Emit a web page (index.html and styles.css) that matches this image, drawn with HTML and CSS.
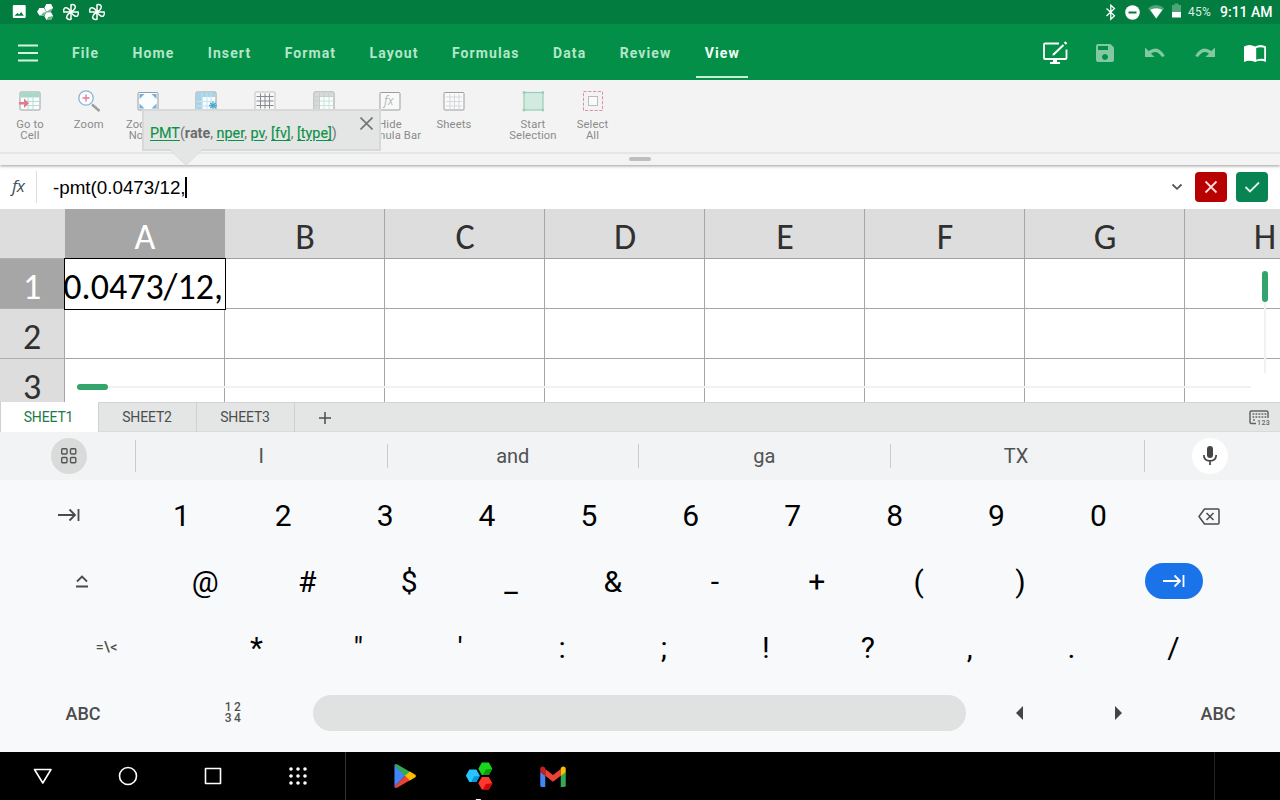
FILE: index.html
```html
<!DOCTYPE html>
<html lang="en">
<head>
<meta charset="utf-8">
<title>Spreadsheet</title>
<link rel="stylesheet" href="styles.css">
</head>
<body>
<div class="screen">
  <div class="status">
    <svg width="120" height="24" viewBox="0 0 120 24">
      <path fill="#fff" fill-rule="evenodd" d="M14 5h10.500q1.200 0 1.200 1.200v10.600q0 1.200-1.200 1.200h-10.500q-1.200 0-1.200-1.200v-10.600q0-1.200 1.200-1.200zM14.500 15.800h9.300l-2.600-3.800-2 2.400-1.700-1.400z"/>
      <g fill="#fff"><path d="M46.300 4h4.800l2 3.800-2.200 3.700h-4.500l-2-3.700zM39.400 8h4.500l2.200 3.800-2.200 3.700h-4.500l-2.300-3.700zM46.300 12.300h4.800l2 3.800-2.200 3.900h-4.500l-2-3.800z"/></g>
      <path fill="#75b290" d="M47 11.300l3-1.700 2.800-1.400-2 3.200zM41 15.300l2-2.600 3-.6-2.200 3.200zM46.500 20l1.800-3 4.700-1-2.200 4z"/>
      <g id="pinwheel" fill="none" stroke="#fff" stroke-width="1.500" stroke-linejoin="round">
        <path id="blade" d="M71 12V4.800C74.500 4 76 6 75 8.200C74.200 10.200 72.800 11 71 12z"/>
        <use href="#blade" transform="rotate(90 71 12)"/><use href="#blade" transform="rotate(180 71 12)"/><use href="#blade" transform="rotate(270 71 12)"/>
      </g>
      <use href="#pinwheel" x="26"/>
    </svg>
    <div class="status-right">
      <svg width="84" height="24" viewBox="1100 0 84 24">
        <path fill="none" stroke="#fff" stroke-width="1.300" d="M1106.500 8.500l8 7.300-3.700 3.400V5.300l3.700 3.300-8 7.300"/>
        <circle cx="1132.500" cy="12.500" r="7.300" fill="#fff"/><path d="M1128.500 11.500h8v2h-8z" fill="#027c3f"/>
        <path fill="#4fa478" d="M1148 8.200q8-6.600 16.300 0l-8.100 10.300z"/><path fill="#fff" d="M1150.200 9.800q6-3.300 12.200 0l-6.200 8.700z"/>
        <path fill="#4fa478" d="M1174.500 3.500h4v1.500h2.500v7h-9v-7h2.500z"/><path fill="#fff" d="M1172 12h9v5.500h-9z"/>
      </svg>
      <span class="battery">45%</span><span class="clock">9:11 AM</span>
    </div>
  </div>
  <header class="appbar">
    <svg class="burger" width="20" height="18" viewBox="0 0 20 18"><path stroke="#d5f5e2" stroke-width="1.800" d="M0 1.500h20M0 9h20M0 16.500h20"/></svg>
    <nav class="menu">
      <span>File</span><span>Home</span><span>Insert</span><span>Format</span><span>Layout</span><span>Formulas</span><span>Data</span><span>Review</span><span class="active">View</span>
    </nav>
    <svg class="tools" width="240" height="56" viewBox="1040 24 240 56">
      <g fill="none" stroke="#fff" stroke-width="1.800"><path d="M1059 43.500h-14q-1 0-1 1v13.500q0 1 1 1h20.500q1 0 1-1v-8.500"/><path stroke-width="2" d="M1053.500 54.500l10-9.500"/></g>
      <path fill="#fff" d="M1053 59h4v3h3v2h-10v-2h3zM1052.300 55.500l.8-2.500 2 2zM1063.800 42.700l1.500-1.500 2 2-1.500 1.500z"/>
      <g fill="#82c8a2"><path fill-rule="evenodd" d="M1098 44h12.500l3.500 3.500v12.500q0 2-2 2h-14q-2 0-2-2v-14q0-2 2-2zM1098 46v4h10v-4zM1105 54a3 3 0 1 0 .01 0z"/>
      <path d="M1145 47.500v9.500h9.500l-3.600-3.600q5.800-4.300 11.200 3.600l2.700-.9q-6.500-12-16.200-5z"/>
      <path d="M1215 47.500v9.500h-9.500l3.600-3.600q-5.800-4.300-11.200 3.600l-2.700-.9q6.500-12 16.200-5z"/></g>
      <path fill="#fff" fill-rule="evenodd" d="M1244 46.500q5.500-3 11 0q5.500-3 11 0v15.500q-5.500-2.500-11 0q-5.500-2.500-11 0zM1256.200 48v11.800q4-1.600 8-.8v-11.300q-4-1-8 .3z"/>
    </svg>
  </header>
  <div class="ribbon">
    <div class="tool w60"><svg viewBox="0 0 22 22"><rect x="1" y="2" width="20" height="18" rx="1" fill="#fafdfd" stroke="#9aa2a5"/><path fill="#a6d9c9" d="M1.500 2.500h19v5h-19z"/><path stroke="#b7ddd3" d="M9 7.500v12M14 7.500v12M6 11.500h14.500M6 15.500h14.500"/><path fill="#e5798b" d="M0 12h5v-3.500l5 4.700-5 4.700v-3.500h-5z"/></svg><span>Go to<br>Cell</span></div>
    <div class="tool w58"><svg viewBox="0 0 22 22"><path stroke="#9aa0a2" stroke-width="2.600" d="M14 14.500l7.500 6.500"/><circle cx="8" cy="8" r="7.200" fill="#f8fcff" stroke="#85b5d9" stroke-width="1.300"/><path stroke="#e5798b" stroke-width="1.300" d="M4.500 8h7M8 4.500v7"/></svg><span>Zoom</span></div>
    <div class="tool w60"><svg viewBox="0 0 22 22"><rect x="1" y="2.500" width="20" height="17.500" rx="1" fill="#fafdff" stroke="#969b9f"/><path fill="#78aed8" d="M2.500 4h5l-5 5zM19.500 4h-5l5 5zM2.500 18.500v-5l5 5zM19.500 18.500v-5l-5 5z"/></svg><span>Zoom to<br>Normal</span></div>
    <div class="tool w58"><svg viewBox="0 0 22 22"><rect x="1" y="2" width="20" height="18" rx="1" fill="#fafdff" stroke="#969b9f"/><path fill="#a5d4e8" d="M1.500 2.500h19v4.500h-13v13h-6z"/><path stroke="#c6e3ee" fill="none" d="M2 11.500h18M2 16h18M12 3v16M16 3v12M7 3v17"/><path stroke="#4ea6d2" stroke-width="1.300" d="M18 11.500v8M14 15.500h8M15.200 12.700l5.600 5.600M20.800 12.700l-5.600 5.600"/></svg></div>
    <div class="tool w59"><svg viewBox="0 0 22 22"><rect x="1" y="2" width="20" height="18" rx="1" fill="#f7f7f7" stroke="#bfc1c2"/><path stroke="#858b90" d="M2.500 6.500h17M2.500 11h17M2.500 15.500h17M6.500 3.500v15M11 3.500v15M15.500 3.500v15"/></svg></div>
    <div class="tool w59"><svg viewBox="0 0 22 22"><rect x="1" y="2" width="20" height="18" rx="1" fill="#f8fcfb" stroke="#9a9ea1"/><path fill="#d7dadb" d="M1.500 2.500h19v4h-14v13h-5z"/><path stroke="#c9e4db" d="M7 11h13M7 15.500h13M11 7v12M16 7v12"/><path stroke="#c9cdce" d="M2 6.500h18.500M6.500 3v16.500M2 11h4M2 15.500h4M11 3v3M16 3v3"/></svg></div>
    <div class="tool w73"><svg viewBox="0 0 22 22"><rect x="1" y="2.500" width="20" height="17.500" rx="1" fill="#f9f9f9" stroke="#999da0"/><text class="fx-icon" x="5" y="15">fx</text></svg><span>Hide<br>Formula Bar</span></div>
    <div class="tool w55"><svg viewBox="0 0 22 22"><rect x="1" y="2.500" width="20" height="17.500" rx="1" fill="#fafafa" stroke="#999da0"/><path stroke="#d6d9da" d="M3 7h16M3 11.500h16M3 16h16M7 4v15M11.500 4v15M16 4v15"/></svg><span>Sheets</span></div>
    <div class="tool w103"><svg viewBox="0 0 22 22"><rect x="2" y="2.500" width="19" height="17.500" fill="#d3eae0" stroke="#96cfb7" stroke-width="1.200"/><path fill="#96cfb7" d="M.7 1.200h2.600v2.600h-2.600zM19.700 1.200h2.600v2.600h-2.600zM.7 18.700h2.600v2.600h-2.600zM19.700 18.700h2.600v2.600h-2.600z"/></svg><span>Start<br>Selection</span></div>
    <div class="tool w15"><svg viewBox="0 0 22 22"><rect x="1.500" y="1.500" width="19" height="19" fill="none" stroke="#dc92a0" stroke-dasharray="3.200 1.550"/><rect x="6.500" y="6.500" width="9" height="9" fill="#fafafa" stroke="#b8bcbd"/></svg><span>Select<br>All</span></div>
    <div class="tip">
      <p><a>PMT</a>(<b>rate</b>, <a>nper</a>, <a>pv</a>, <a>[fv]</a>, <a>[type]</a>)</p>
      <svg class="tip-x" width="13" height="13" viewBox="0 0 13 13"><path stroke="#737473" stroke-width="1.600" d="M.5.500l12 12M12.500.500l-12 12"/></svg>
      <svg class="tip-arrow" width="32" height="17" viewBox="0 0 32 17"><path d="M0 0h32l-15 15q-1 1-2 0z" fill="#e4e6e5"/><path d="M0 1l15 14q1 1 2 0l15-14" fill="none" stroke="#d9dbda"/></svg>
    </div>
  </div>
  <div class="handle"><i></i></div>
  <div class="formula">
    <span class="fx">fx</span>
    <div class="input">-pmt(0.0473/12,<i></i></div>
    <svg width="12" height="8" viewBox="0 0 12 8"><path fill="none" stroke="#555" stroke-width="1.800" d="M1.500 1.500l4.500 4.300 4.500-4.300"/></svg>
    <button class="no"><svg width="14" height="14" viewBox="0 0 14 14"><path stroke="#f6dada" stroke-width="1.800" d="M1.500 1.500l11 11M12.500 1.500l-11 11"/></svg></button>
    <button class="yes"><svg width="16" height="14" viewBox="0 0 16 14"><path fill="none" stroke="#e2f3ea" stroke-width="1.800" d="M1.500 7l4.500 4.500 9-9"/></svg></button>
  </div>
  <div class="sheet">
    <div class="h corner"></div><div class="h sel">A</div><div class="h">B</div><div class="h">C</div><div class="h">D</div><div class="h">E</div><div class="h">F</div><div class="h">G</div><div class="h">H</div>
    <div class="h r sel">1</div><div class="c"><div class="edit"><span>-pmt(0.0473/12,</span></div></div><div class="c"></div><div class="c"></div><div class="c"></div><div class="c"></div><div class="c"></div><div class="c"></div><div class="c"></div>
    <div class="h r">2</div><div class="c"></div><div class="c"></div><div class="c"></div><div class="c"></div><div class="c"></div><div class="c"></div><div class="c"></div><div class="c"></div>
    <div class="h r">3</div><div class="c"></div><div class="c"></div><div class="c"></div><div class="c"></div><div class="c"></div><div class="c"></div><div class="c"></div><div class="c"></div>
    <div class="vbar"><i></i></div><div class="hbar"><i></i></div>
  </div>
  <div class="tabs">
    <span class="tab on">SHEET1</span><span class="tab">SHEET2</span><span class="tab">SHEET3</span>
    <svg class="add" width="14" height="14" viewBox="0 0 14 14"><path stroke="#4b4d4c" stroke-width="1.500" d="M1 7h12M7 1v12"/></svg>
    <svg class="kbd" width="24" height="18" viewBox="0 0 24 18"><path fill="none" stroke="#626463" stroke-width="1.500" d="M8 14.500h-4.500q-1.500 0-1.500-1.500v-9.500q0-1.500 1.500-1.500h15q1.500 0 1.500 1.500v5.500"/><path stroke="#626463" stroke-width="1.700" stroke-dasharray="1.800 1.200" d="M4.500 5h14M4.500 8h14M5 11h3"/><text x="9" y="16">123</text></svg>
  </div>
  <div class="suggest">
    <div class="side"><span class="round gray"><svg width="18" height="18" viewBox="0 0 18 18"><g fill="none" stroke="#555" stroke-width="1.400"><rect x="1.700" y="1.700" width="5.300" height="5.300" rx="1"/><rect x="10.500" y="1.700" width="5.300" height="5.300" rx="1"/><rect x="1.700" y="10.500" width="5.300" height="5.300" rx="1"/><rect x="10.500" y="10.500" width="5.300" height="5.300" rx="1"/></g></svg></span></div>
    <div class="word">I</div><div class="word">and</div><div class="word">ga</div><div class="word last">TX</div>
    <div class="side mic"><span class="round"><svg width="16" height="20" viewBox="0 0 16 20"><rect x="5" y="0" width="6" height="12" rx="3" fill="#444"/><path fill="none" stroke="#444" stroke-width="1.700" d="M1.800 9q0 5.800 6.200 5.800t6.200-5.800M8 15v4"/></svg></span></div>
  </div>
  <div class="keyboard">
    <div class="krow one">
      <div class="fn"><svg width="22" height="14" viewBox="0 0 22 14"><path fill="none" stroke="#4b4b4b" stroke-width="1.800" d="M0 7h17M11.500 1.500l5.500 5.500-5.500 5.500M20.500 1v12"/></svg></div>
      <kbd>1</kbd><kbd>2</kbd><kbd>3</kbd><kbd>4</kbd><kbd>5</kbd><kbd>6</kbd><kbd>7</kbd><kbd>8</kbd><kbd>9</kbd><kbd>0</kbd>
      <div class="fn end"><svg width="22" height="17" viewBox="0 0 22 17"><path fill="none" stroke="#4b4b4b" stroke-width="1.500" stroke-linejoin="round" d="M6.500 1h13.500q1 0 1 1v13q0 1-1 1h-13.500l-5.500-7.500z"/><path stroke="#4b4b4b" stroke-width="1.500" d="M8.500 5l7 7M15.500 5l-7 7"/></svg></div>
    </div>
    <div class="krow two">
      <div class="fn"><svg width="14" height="14" viewBox="0 0 14 14"><path fill="none" stroke="#4b4b4b" stroke-width="1.800" d="M2 7.500l5-5 5 5M1 12.500h12"/></svg></div>
      <kbd>@</kbd><kbd>#</kbd><kbd>$</kbd><kbd>_</kbd><kbd>&amp;</kbd><kbd>-</kbd><kbd>+</kbd><kbd>(</kbd><kbd>)</kbd>
      <div class="fn end"><span class="enter"><svg width="22" height="14" viewBox="0 0 22 14"><path fill="none" stroke="#fff" stroke-width="1.800" d="M0 7h17M11.500 1.500l5.500 5.500-5.500 5.500M20.500 1v12"/></svg></span></div>
    </div>
    <div class="krow three">
      <div class="fn sym">=\&lt;</div>
      <kbd>*</kbd><kbd>"</kbd><kbd>'</kbd><kbd>:</kbd><kbd>;</kbd><kbd>!</kbd><kbd>?</kbd><kbd>,</kbd><kbd>.</kbd><kbd>/</kbd>
    </div>
    <div class="krow four">
      <div class="abc">ABC</div>
      <div class="nums">1 2<br>3 4</div>
      <div class="space"></div>
      <div class="arrow"><svg width="7" height="14" viewBox="0 0 7 14"><path fill="#444" d="M7 0v14l-7-7z"/></svg></div>
      <div class="arrow"><svg width="7" height="14" viewBox="0 0 7 14"><path fill="#444" d="M0 0v14l7-7z"/></svg></div>
      <div class="abc end">ABC</div>
    </div>
  </div>
  <footer class="navbar">
    <svg width="345" height="48" viewBox="0 752 345 48"><g fill="none" stroke="#fff" stroke-width="1.600" stroke-linejoin="round"><path d="M34.500 769.500h16.500l-8.200 13.500z"/><circle cx="128" cy="776" r="8.500"/><rect x="205.500" y="768.500" width="15" height="15"/></g><path stroke="#fff" stroke-width="3.600" stroke-linecap="round" stroke-dasharray="0 7" d="M291 769h15M291 776h15M291 783h15"/></svg>
    <svg class="apps" width="869" height="48" viewBox="346 752 869 48">
      <path fill="#4285f4" d="M394.500 765v22l11-11.500z"/><path fill="#34a853" d="M394.500 765q1-1.500 3-.5l13 7.500-5 4.500z"/><path fill="#ea4335" d="M394.500 787q1 1.500 3 .5l13-7.500-5-4.500z"/><path fill="#fbbc04" d="M410 771.500l5 3q2 1.500 0 3l-5 3-5-4.700z"/>
      <path fill="#27c4ff" d="M469.500 769.500h7l3.500 6.200-3.500 6.300h-7l-3.500-6.300z"/><path fill="#0b93dc" d="M471.500 782l2.500-5.500 6-.8-3.500 6.300z"/>
      <path fill="#18d51d" d="M482 762.500h7l3.500 6.200-3.500 6.300h-7l-3.500-6.300z"/><path fill="#109a0b" d="M483 775l3-5.500 6.500-.8-3.500 6.300z"/>
      <path fill="#ff3830" d="M482 777h7l3.500 6.200-3.500 6.300h-7l-3.500-6.300z"/><path fill="#d30709" d="M483 789.500l3-5.500 6.500-.8-3.500 6.300z"/>
      <path fill="#4285f4" d="M540.500 772l5 3.500v11.500h-3.500q-1.500 0-1.500-1.500z"/><path fill="#34a853" d="M566 772l-5 3.500v11.500h3.500q1.500 0 1.500-1.500z"/><path fill="#ea4335" d="M545.500 769l7.700 6 7.800-6v6.800l-7.800 6-7.700-6z"/><path fill="#c5221f" d="M540.500 769q0-2.500 2.500-2.500 1.500 0 2.500 1.500v8l-5-3.800z"/><path fill="#fbbc04" d="M566 769q0-2.500-2.500-2.500-1.500 0-2.500 1.500v8l5-3.800z"/>
      <path fill="#fff" d="M476 799h5v1h-5z"/>
    </svg>
  </footer>
</div>
</body>
</html>
```
FILE: styles.css
```css
* { box-sizing: border-box; }
body { margin: 0; }
.screen { width: 1280px; height: 800px; overflow: hidden; display: flex; flex-direction: column; font-family: Roboto, "Liberation Sans", sans-serif; }
svg { display: block; flex: none; }

.status { height: 24px; background: #027c3f; display: flex; justify-content: space-between; color: #fff; }
.status-right { display: flex; align-items: center; width: 180px; }
.battery { font-size: 12px; letter-spacing: .2px; color: #d9f0e2; width: 32px; padding-left: 4px; }
.clock { font-size: 14px; font-weight: 500; white-space: nowrap; padding-left: 4px; letter-spacing: 0; }

.appbar { height: 56px; background: #048f48; display: flex; align-items: center; }
.burger { margin: 2px 0 0 18px; }
.menu { display: flex; margin-left: 25px; height: 56px; flex: 1; gap: 16.400px; }
.menu span { padding: 4px 8px 0 9px; display: flex; align-items: center; height: 54px; font-size: 14px; font-weight: 700; letter-spacing: 1.100px; color: #b4e6c9; }
.menu .active { color: #f2fff7; border-bottom: 2px solid #c9eed8; padding-top: 6px; }

.ribbon { height: 74px; background: #f3f3f3; border-bottom: 2px solid #e6e6e6; display: flex; position: relative; padding: 10px 0 0 .5px; z-index: 2; }
.tool { display: flex; flex-direction: column; align-items: center; white-space: nowrap; flex: none; }
.tool svg { width: 22px; height: 22px; }
.tool span { margin-top: 7px; font-size: 11.200px; line-height: 11px; letter-spacing: .15px; color: #898b8b; text-align: center; }
.w60 { width: 59px; } .w58 { width: 58.500px; } .w59 { width: 59px; } .w73 { width: 73px; } .w55 { width: 55px; } .w103 { width: 103px; } .w15 { width: 16px; }
.fx-icon { font: italic 12px "Open Sans", sans-serif; fill: #b4b7b8; }

.tip { position: absolute; left: 142px; top: 29px; width: 239px; height: 42px; background: #e4e6e5; border: 2px solid #d7d9d8; }
.tip p { margin: 0; padding: 14px 0 0 6px; font-size: 14.350px; line-height: 17px; color: #777; white-space: nowrap; }
.tip b { color: #6b6b6b; font-weight: 700; }
.tip a { color: #0b9148; font-weight: 400; -webkit-text-stroke: .15px #0b9148; text-decoration: underline; text-underline-offset: 2px; }
.tip-x { position: absolute; right: 6px; top: 6px; }
.tip-arrow { position: absolute; left: 26px; top: 38px; }

.handle { height: 11px; background: #f3f3f3; display: flex; justify-content: center; padding-top: 3px; box-shadow: 0 1px 3px #0006; z-index: 1; }
.handle i { width: 22px; height: 4px; border-radius: 2px; background: #bebebe; }

.formula { height: 44px; background: #fff; display: flex; align-items: center; padding-right: 12px; }
.fx { width: 37px; height: 32px; border-right: 1px solid #dcdcdc; font: italic 17px/29px "Open Sans", sans-serif; color: #42515a; padding-left: 12px; letter-spacing: -.5px; }
.input { flex: 1; margin: 1px 0 0 16px; display: flex; align-items: center; font: 18.800px "Liberation Sans", Arial, sans-serif; color: #000; }
.input i { width: 2px; height: 21px; background: #000; margin-left: -1px; }
.formula button { width: 32px; height: 30px; border: 0; border-radius: 4px; padding: 0; display: flex; align-items: center; justify-content: center; }
.no { background: #b90000; margin: 0 9px 0 12px; }
.yes { background: #088352; }

.sheet { height: 193px; overflow: hidden; position: relative; display: grid; grid-template-columns: 65px repeat(8, 160px); grid-auto-rows: 50px; align-content: start; justify-content: start; background: #fff; }
.h { background: #ddd; color: #303030; border-right: 1px solid #a6a6a6; border-bottom: 1px solid #a0a0a0; display: flex; align-items: center; justify-content: center; padding: 6px 0 0 1px; font: 36px/1 Carlito, Calibri, Lato, sans-serif; }
.h.r { border-bottom-color: #b0b0b0; padding-left: 0; }
.corner { border-right: 0; border-bottom-color: #b0b0b0; }
.sel { background: #a6a6a6; color: #fff; border-right-color: #a6a6a6; }
.c { border-right: 1px solid #a6a6a6; border-bottom: 1px solid #a6a6a6; }
.edit { width: 162px; height: 52px; margin: -1px; border: 1px solid #000; background: #fff; position: relative; z-index: 1; overflow: hidden; display: flex; justify-content: flex-end; align-items: center; padding: 6px 2px 0 0; font: 36px/1 Carlito, Calibri, Lato, sans-serif; color: #000; white-space: nowrap; }
.vbar { position: absolute; left: 1262px; top: 62px; width: 6px; height: 102px; background: linear-gradient(#f1f1f1, #f1f1f1) 2px 0 / 2px 100% no-repeat; }
.vbar i { display: block; width: 6px; height: 31px; border-radius: 3px; background: #32a46c; }
.hbar { position: absolute; left: 77px; top: 175px; width: 1174px; height: 6px; background: linear-gradient(#f1f1f1, #f1f1f1) 0 2px / 100% 2px no-repeat; }
.hbar i { display: block; width: 31px; height: 6px; border-radius: 3px; background: #32a46c; }

.tabs { height: 30px; background: #e4e6e5; border-top: 1px solid #d2d4d3; border-bottom: 1px solid #d9dbdb; display: flex; align-items: center; }
.tab { width: 98px; height: 30px; margin-top: -1px; border-right: 1px solid #cfd1d0; display: flex; align-items: center; justify-content: center; padding-right: 1px; font-size: 14px; letter-spacing: -.15px; color: #4c4e4d; }
.tab:first-child { width: 99px; border-left: 1px solid #cfd1d0; padding-right: 2px; }
.on { background: #fff; color: #1b7a4c; }
.add { margin: 2px 0 0 23px; }
.kbd { margin: 1px 8px 0 auto; }
.kbd text { font: 500 7px Roboto, sans-serif; fill: #626463; letter-spacing: .4px; }

.suggest { height: 48px; background: #f1f3f4; display: flex; align-items: center; }
.side { width: 136px; height: 32px; border-right: 1px solid #c9cccd; display: flex; align-items: center; justify-content: center; }
.side .round { margin-left: 3px; }
.mic { border: 0; width: 135px; }
.mic .round { margin: 0 5px 0 0; background: #fff; }
.round { width: 36px; height: 36px; border-radius: 50%; display: flex; align-items: center; justify-content: center; }
.gray { background: #d9dada; }
.word { width: 251.500px; height: 24px; border-right: 1px solid #c9cccd; text-align: center; font-size: 20px; line-height: 24px; color: #505253; }
.word.last { height: 32px; line-height: 32px; width: 254px; padding-right: 2px; }

.keyboard { height: 272px; background: #f8f9fb; padding-top: 3px; }
.krow { height: 66px; display: flex; align-items: center; }
.krow kbd { width: 101.900px; font: 30px/36px Roboto, sans-serif; text-align: center; color: #000; }
.fn { display: flex; align-items: center; justify-content: center; height: 66px; }
.one .fn { width: 130.400px; padding: 0 0 2px 7px; }
.one .end { width: 120px; padding: 0; }
.two .fn { width: 154.400px; padding: 0 0 2px 10px; }
.two .end { width: 206px; padding: 0 0 2px; }
.enter { width: 58px; height: 36px; border-radius: 18px; background: #1a73e8; display: flex; align-items: center; justify-content: center; }
.three .fn { width: 205.500px; padding: 0 0 2px 8px; }
.sym { font-size: 14px; font-weight: 500; color: #505050; letter-spacing: .4px; }
.four { margin-top: -1px; }
.abc { width: 166px; text-align: center; font-size: 18px; font-weight: 500; color: #4c4c4c; }
.nums { width: 147px; padding-right: 13px; text-align: center; font-size: 12px; line-height: 11.500px; font-weight: 500; word-spacing: -1.500px; letter-spacing: .4px; color: #505050; }
.space { width: 653px; height: 36px; border-radius: 18px; background: #e0e2e1; }
.arrow { width: 99px; display: flex; justify-content: center; padding-left: 8px; }
.abc.end { width: 108px; }

.navbar { height: 48px; background: #000; display: flex; }
.apps { border-left: 1px solid #333; border-right: 1px solid #222; width: 870px; }
```
